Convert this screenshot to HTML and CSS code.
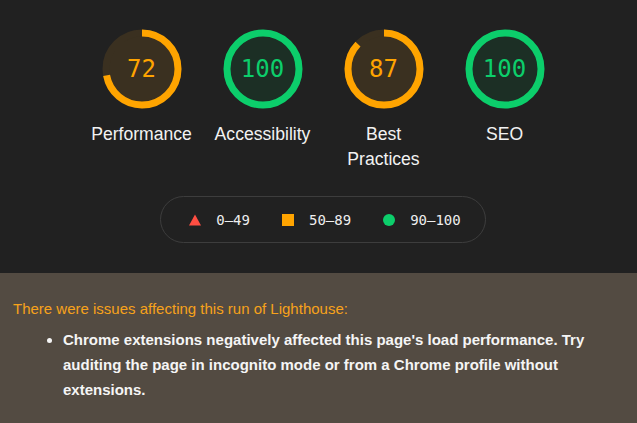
FILE: index.html
```html
<!DOCTYPE html>
<html>
<head>
<meta charset="utf-8">
<link rel="stylesheet" href="styles.css">
</head>
<body>
<section class="scores">
  <div class="gauges">
    <div class="gauge avg">
      <svg viewBox="0 0 80 80" class="ring">
        <circle class="base" cx="40" cy="40" r="36"></circle>
        <circle class="arc" cx="40" cy="40" r="36" stroke-dasharray="162.9 300" transform="rotate(-90 40 40)"></circle>
      </svg>
      <div class="value">72</div>
      <div class="label">Performance</div>
    </div>
    <div class="gauge pass">
      <svg viewBox="0 0 80 80" class="ring">
        <circle class="base" cx="40" cy="40" r="36"></circle>
        <circle class="arc" cx="40" cy="40" r="36" stroke-dasharray="226.2 300" transform="rotate(-90 40 40)"></circle>
      </svg>
      <div class="value">100</div>
      <div class="label">Accessibility</div>
    </div>
    <div class="gauge avg">
      <svg viewBox="0 0 80 80" class="ring">
        <circle class="base" cx="40" cy="40" r="36"></circle>
        <circle class="arc" cx="40" cy="40" r="36" stroke-dasharray="196.8 300" transform="rotate(-90 40 40)"></circle>
      </svg>
      <div class="value">87</div>
      <div class="label">Best Practices</div>
    </div>
    <div class="gauge pass">
      <svg viewBox="0 0 80 80" class="ring">
        <circle class="base" cx="40" cy="40" r="36"></circle>
        <circle class="arc" cx="40" cy="40" r="36" stroke-dasharray="226.2 300" transform="rotate(-90 40 40)"></circle>
      </svg>
      <div class="value">100</div>
      <div class="label">SEO</div>
    </div>
  </div>
  <div class="legend">
    <span class="item"><svg class="icon" viewBox="0 0 12 12"><polygon points="6,0.5 12,11.5 0,11.5" fill="#ff4e42"/></svg>0–49</span>
    <span class="item"><span class="sq"></span>50–89</span>
    <span class="item"><span class="dot"></span>90–100</span>
  </div>
</section>
<section class="warning">
  <p class="warn-title">There were issues affecting this run of Lighthouse:</p>
  <ul class="warn-list">
    <li>Chrome extensions negatively affected this page's load performance. Try auditing the page in incognito mode or from a Chrome profile without extensions.</li>
  </ul>
</section>
</body>
</html>
```
FILE: styles.css
```css
html, body {
  margin: 0;
  padding: 0;
}
body {
  background: #212121;
  font-family: "Liberation Sans", Arial, sans-serif;
  color: #f0f0f0;
  width: 637px;
  height: 423px;
  overflow: hidden;
}
.scores {
  padding: 29px 0 0 9px;
  height: 244px;
  display: flex;
  flex-direction: column;
  align-items: center;
}
.gauges {
  display: flex;
  gap: 16px;
}
.gauge {
  width: 105px;
  position: relative;
  display: flex;
  flex-direction: column;
  align-items: center;
}
.ring {
  width: 80px;
  height: 80px;
  display: block;
}
.base {
  stroke-width: 7;
}
.arc {
  fill: none;
  stroke-width: 7;
}
.avg .base { fill: #3a3020; stroke: #3a3020; }
.avg .arc { stroke: #ffa400; }
.avg .value { color: #ffa400; }
.pass .base { fill: #1c2f25; stroke: #1c2f25; }
.pass .arc { stroke: #0cce6b; }
.pass .value { color: #0cce6b; }
.value {
  position: absolute;
  top: 0;
  left: 0;
  right: 0;
  height: 80px;
  display: flex;
  align-items: center;
  justify-content: center;
  font-family: "DejaVu Sans Mono", monospace;
  font-size: 24px;
}
.label {
  margin-top: 13px;
  font-size: 17.6px;
  line-height: 25px;
  text-align: center;
  color: #f2f2f2;
}
.legend {
  margin-top: 24px;
  width: 326px;
  height: 47px;
  box-sizing: border-box;
  border: 1px solid #3d3d3d;
  border-radius: 24px;
  display: flex;
  align-items: center;
  justify-content: center;
  gap: 32px;
  padding-left: 4px;
  font-family: "DejaVu Sans Mono", monospace;
  font-size: 14px;
  color: #eeeeee;
}
.item {
  display: flex;
  align-items: center;
  gap: 15px;
}
.icon {
  width: 12px;
  height: 12px;
}
.sq {
  width: 12px;
  height: 12px;
  background: #ffa400;
}
.dot {
  width: 12px;
  height: 12px;
  border-radius: 50%;
  background: #0cce6b;
}
.warning {
  background: #534b42;
  height: 150px;
  padding: 27px 13px 0 13px;
  box-sizing: border-box;
}
.warn-title {
  margin: 0;
  color: #f7a21b;
  font-size: 15px;
  line-height: 18px;
}
.warn-list {
  margin: 9px 0 0 0;
  padding-left: 50px;
  font-weight: bold;
  font-size: 15px;
  line-height: 25px;
  color: #f5f5f5;
}
```
